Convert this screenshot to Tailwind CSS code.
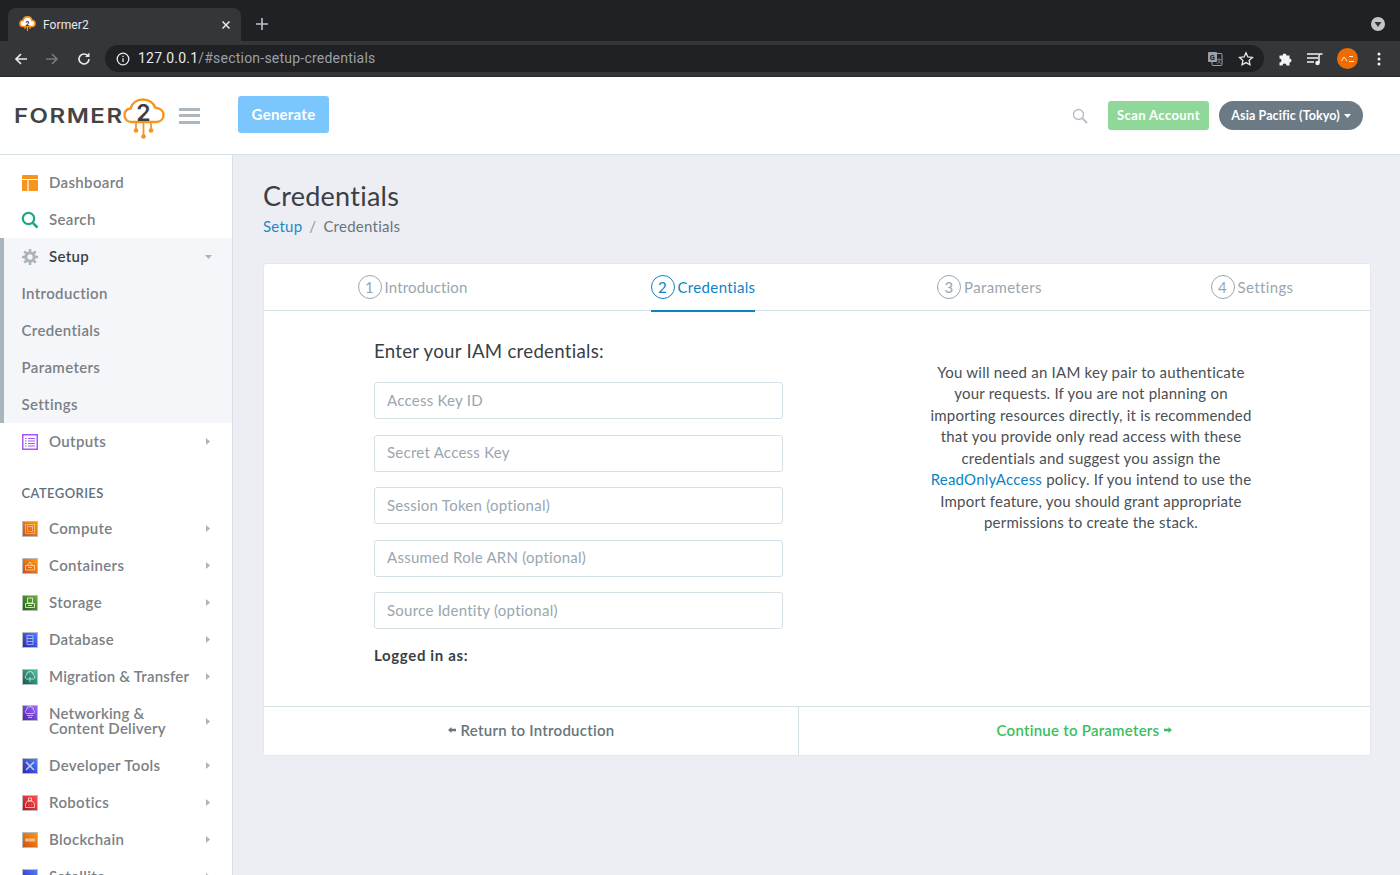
<!DOCTYPE html>
<html lang="en">
<head>
<meta charset="utf-8">
<title>Former2</title>
<script src="https://cdn.jsdelivr.net/npm/@tailwindcss/browser@4"></script>
</head>
<body class="w-[1400px] h-[875px] overflow-hidden bg-[#eceef3] [font-family:Lato,sans-serif] text-[15px] tracking-[0.25px]">
<div class="flex flex-col h-[875px] overflow-hidden">

<!-- Browser chrome -->
<div class="h-[41px] bg-[#202124] flex items-end pl-2 [font-family:Roboto,sans-serif] tracking-normal shrink-0">
  <div class="w-[233px] h-[33px] bg-[#35363a] rounded-t-lg flex items-center pl-[11px] pr-[10px] text-[12px] tracking-[0.1px] text-[#e8eaed]">
    <svg width="17" height="17" viewBox="0 0 17 17" class="shrink-0"><path d="M4 10.500a3 3 0 0 1 0-6 4.600 4.600 0 0 1 9 0 3 3 0 0 1 0 6z" fill="#fff" stroke="#f7941e" stroke-width="1.600"/><text x="8.500" y="10" font-size="7" font-weight="700" text-anchor="middle" fill="#333">2</text><path d="M6 11v2M8.500 11v4M11 11v2" stroke="#f7941e" stroke-width="1.200"/></svg>
    <span class="ml-[7px] flex-1">Former2</span>
    <svg width="10" height="10" viewBox="0 0 10 10"><path d="M1.500 1.500l7 7M8.500 1.500l-7 7" stroke="#e8eaed" stroke-width="1.500"/></svg>
  </div>
  <svg width="12" height="12" viewBox="0 0 12 12" class="ml-[15px] mb-[11px]"><path d="M6 0v12M0 6h12" stroke="#bdc1c6" stroke-width="1.600"/></svg>
  <div class="flex-1"></div>
  <svg width="14" height="14" viewBox="0 0 14 14" class="mr-[15px] mb-[10px]"><circle cx="7" cy="7" r="7" fill="#c4c7c9"/><path d="M3.500 5h7L7 10z" fill="#35363a"/></svg>
</div>
<div class="h-[36px] bg-[#35363a] border-b border-[#2a2b2e] flex items-center [font-family:Roboto,sans-serif] tracking-normal shrink-0">
  <svg width="16" height="16" viewBox="0 0 16 16" class="ml-[13px]"><path d="M14 8H3M8 3L3 8l5 5" fill="none" stroke="#e8eaed" stroke-width="1.700"/></svg>
  <svg width="16" height="16" viewBox="0 0 16 16" class="ml-[15px]"><path d="M2 8h11M8 3l5 5-5 5" fill="none" stroke="#76787c" stroke-width="1.700"/></svg>
  <svg width="16" height="16" viewBox="0 0 16 16" class="ml-[16px]"><path d="M13 8a5 5 0 1 1-1.500-3.600" fill="none" stroke="#e8eaed" stroke-width="1.600"/><path d="M13.500 1.500v4.500H9z" fill="#e8eaed"/></svg>
  <div class="ml-[13px] w-[1159px] h-[27px] rounded-full bg-[#202124] flex items-center pl-[11px] pr-[10px] text-[14px] tracking-[0.22px]">
    <svg width="14" height="14" viewBox="0 0 14 14" class="shrink-0"><circle cx="7" cy="7" r="5.800" fill="none" stroke="#e8eaed" stroke-width="1.300"/><path d="M7 6.200v3.800M7 3.800v1.300" stroke="#e8eaed" stroke-width="1.300"/></svg>
    <span class="ml-2 text-[#e8eaed]">127.0.0.1</span><span class="text-[#9aa0a6] flex-1">/#section-setup-credentials</span>
    <svg width="16" height="16" viewBox="0 0 16 16" class="mr-[15px]"><rect x="5" y="2.500" width="10" height="12" rx="1" fill="none" stroke="#9aa0a6"/><rect x="1" y="1" width="9" height="10" rx="1" fill="#9aa0a6"/><text x="5.500" y="9" font-size="7.500" font-weight="700" text-anchor="middle" fill="#202124">G</text><text x="12" y="12" font-size="6" text-anchor="middle" fill="#9aa0a6">文</text></svg>
    <svg width="16" height="16" viewBox="0 0 16 16"><path d="M8 1.800l1.900 4.100 4.500.5-3.300 3 .9 4.400L8 11.600l-4 2.200.9-4.400-3.300-3 4.500-.5z" fill="none" stroke="#e8eaed" stroke-width="1.300"/></svg>
  </div>
  <svg width="16" height="16" viewBox="0 0 16 16" class="ml-[13px]"><path d="M2 5h3a2 2 0 1 1 4 0h3v3a2 2 0 1 1 0 4v3H9a2 2 0 1 0-4 0H2v-3a2 2 0 1 0 0-4z" fill="#f1f3f4" transform="translate(0.500 -0.500)"/></svg>
  <svg width="16" height="14" viewBox="0 0 16 14" class="ml-[14px]"><path d="M0 2h11M0 6h11M0 10h7" stroke="#f1f3f4" stroke-width="1.500"/><path d="M12 11V2h3.500" fill="none" stroke="#f1f3f4" stroke-width="1.500"/><circle cx="10.500" cy="11" r="2.200" fill="#f1f3f4"/></svg>
  <div class="ml-[14px] w-[21px] h-[21px] rounded-full bg-[#ef6c00] flex items-center justify-center"><svg width="14" height="8" viewBox="0 0 14 8"><path d="M0.500 6L3 2l3 4M8 1.500h4M8 6.500h5" fill="none" stroke="#fff" stroke-width="0.900"/></svg></div>
  <svg width="4" height="14" viewBox="0 0 4 14" class="ml-[19px]"><circle cx="2" cy="2" r="1.500" fill="#f1f3f4"/><circle cx="2" cy="7" r="1.500" fill="#f1f3f4"/><circle cx="2" cy="12" r="1.500" fill="#f1f3f4"/></svg>
</div>

<!-- App header -->
<header class="h-[78px] bg-white border-b border-[#d5dfe6] flex items-center shrink-0">
  <div class="ml-[14px] w-[150px] flex items-center">
    <div class="w-[109px] shrink-0 mt-[3px]"><span class="inline-block origin-left scale-x-[1.2] [font-family:Inter,sans-serif] text-[20px] font-semibold leading-none text-[#444] tracking-[1.250px]">FORMER</span></div>
    <svg width="42" height="42" viewBox="0 0 42 42" class="shrink-0 mt-[7px]"><path d="M8 24C3.500 24 1.500 20 1.500 17C1.500 13.500 4 11 7.500 10.500C9 5 14 1.500 20 1.500C26 1.500 30.500 5 32 9.500C37 10 40.500 13 40.500 17C40.500 21 37.500 24 33 24Z" fill="#fff" stroke="#f7941e" stroke-width="2.400"/><text x="20.500" y="23" font-size="23" font-weight="600" text-anchor="middle" fill="#3f3f3f" font-family="Inter">2</text><path d="M13 24v8M28 24v8M20.500 24v14" stroke="#f7941e" stroke-width="1.800"/><circle cx="13" cy="32.500" r="2.300" fill="#f7941e"/><circle cx="28" cy="32.500" r="2.300" fill="#f7941e"/><circle cx="20.500" cy="38.500" r="2.300" fill="#f7941e"/></svg>
  </div>
  <div class="ml-[15px] w-[21px] flex flex-col gap-[3.500px]">
    <div class="h-[3px] bg-[#adb6bd]"></div><div class="h-[3px] bg-[#adb6bd]"></div><div class="h-[3px] bg-[#adb6bd]"></div>
  </div>
  <button class="ml-[38px] mb-[2px] w-[91px] h-[37px] rounded-[3px] bg-[#7cc6fe] text-white font-bold text-[15px]">Generate</button>
  <div class="flex-1"></div>
  <svg width="16" height="16" viewBox="0 0 16 16" class="mr-[20px]"><circle cx="6.500" cy="6.500" r="5" fill="none" stroke="#b4bcc3" stroke-width="1.300"/><path d="M10.200 10.200L15 15" stroke="#b4bcc3" stroke-width="1.800"/></svg>
  <button class="w-[101px] h-[29px] rounded-[3px] bg-[#90d89a] text-white font-bold text-[13px] tracking-[0.4px]">Scan Account</button>
  <button class="ml-[10px] mr-[37px] w-[144px] h-[29px] pt-[1px] rounded-full bg-[#6c7a86] text-white font-bold text-[12.500px] tracking-[0.1px] flex items-center justify-center gap-1">Asia Pacific (Tokyo)<svg width="7" height="4" viewBox="0 0 7 4"><path d="M0 0h7L3.500 4z" fill="#fff"/></svg></button>
</header>

<div class="flex flex-1 min-h-0">
  <!-- Sidebar -->
  <nav class="w-[233px] shrink-0 bg-white border-r border-[#d5dfe6] pt-[9px] overflow-hidden text-[#7b8085] font-semibold tracking-[0.35px]">
    <div class="h-[37px] flex items-center pl-[22px]"><svg width="16" height="16" viewBox="0 0 16 16" class="shrink-0"><rect width="16" height="16" rx="1" fill="#f7941e"/><path d="M0 4.500h16M6 4.500V16" stroke="#fff" stroke-width="1.200"/></svg><span class="ml-[11px]">Dashboard</span></div>
    <div class="h-[37px] flex items-center pl-[21px]"><svg width="18" height="18" viewBox="0 0 18 18" class="shrink-0"><circle cx="7.500" cy="7.500" r="5.700" fill="none" stroke="#1aa88a" stroke-width="2.200"/><path d="M11.800 11.800L16.500 16.500" stroke="#1aa88a" stroke-width="2.600"/></svg><span class="ml-[10px]">Search</span></div>

    <div class="bg-[#f4f6f9] border-l-4 border-[#a9b4bc]">
      <div class="h-[37px] flex items-center pl-[18px] pr-[20px]"><svg width="16" height="16" viewBox="0 0 16 16" class="shrink-0"><circle cx="8" cy="8" r="4.200" fill="none" stroke="#a9b4bc" stroke-width="3"/><path d="M8 0v3M8 13v3M0 8h3M13 8h3M2.300 2.300l2.100 2.100M11.600 11.600l2.100 2.100M2.300 13.700l2.100-2.100M11.600 4.400l2.100-2.100" stroke="#a9b4bc" stroke-width="2.600"/></svg><span class="ml-[11px] flex-1 text-[#3a3f44]">Setup</span><svg width="7" height="4" viewBox="0 0 7 4"><path d="M0 0h7L3.500 4z" fill="#a9b4bc"/></svg></div>
      <div class="h-[37px] flex items-center pl-[17.500px]">Introduction</div>
      <div class="h-[37px] flex items-center pl-[17.500px]">Credentials</div>
      <div class="h-[37px] flex items-center pl-[17.500px]">Parameters</div>
      <div class="h-[37px] flex items-center pl-[17.500px]">Settings</div>
    </div>

    <div class="h-[37px] flex items-center pl-[22px] pr-[22px]"><svg width="16" height="16" viewBox="0 0 16 16" class="shrink-0"><rect x="0.750" y="0.750" width="14.500" height="14.500" fill="none" stroke="#a855f7" stroke-width="1.500"/><path d="M3 4.500h1.500M6 4.500h7M3 7h1.500M6 7h7M3 9.500h1.500M6 9.500h7M3 12h1.500M6 12h7" stroke="#a855f7" stroke-width="1.100"/></svg><span class="ml-[11px] flex-1">Outputs</span><svg width="4" height="7" viewBox="0 0 4 7"><path d="M0 0l4 3.500L0 7z" fill="#a9b4bc"/></svg></div>

    <div class="mt-[17px] h-[33px] pl-[21.500px] flex items-center text-[13px] tracking-[0.4px] text-[#5f6f7d]">CATEGORIES</div>

    <div class="h-[37px] flex items-center pl-[22px] pr-[22px]"><svg width="16" height="16" viewBox="0 0 14 14" class="shrink-0 border border-[#b8bcc0] bg-linear-to-tr from-[#c8511b] to-[#f90]"><rect x="2.500" y="2.500" width="9" height="9" fill="none" stroke="#fff" stroke-opacity=".4"/><rect x="4.500" y="4.500" width="5" height="5" fill="none" stroke="#fff" stroke-opacity=".4"/></svg><span class="ml-[11px] flex-1">Compute</span><svg width="4" height="7" viewBox="0 0 4 7"><path d="M0 0l4 3.500L0 7z" fill="#a9b4bc"/></svg></div>
    <div class="h-[37px] flex items-center pl-[22px] pr-[22px]"><svg width="16" height="16" viewBox="0 0 14 14" class="shrink-0 border border-[#b8bcc0] bg-linear-to-tr from-[#c8511b] to-[#f90]"><path d="M2.500 6.500h9v4.500h-9zM4.500 6.500L7 3l2.500 3.500M5 8.500h4" fill="none" stroke="#fff" stroke-opacity=".6"/></svg><span class="ml-[11px] flex-1">Containers</span><svg width="4" height="7" viewBox="0 0 4 7"><path d="M0 0l4 3.500L0 7z" fill="#a9b4bc"/></svg></div>
    <div class="h-[37px] flex items-center pl-[22px] pr-[22px]"><svg width="16" height="16" viewBox="0 0 14 14" class="shrink-0 border border-[#b8bcc0] bg-linear-to-tr from-[#1b660f] to-[#6cae3e]"><path d="M4.500 2h5v5h-5zM2.500 7.500h9v4h-9zM5 9.500h4" fill="none" stroke="#fff" stroke-opacity=".75"/></svg><span class="ml-[11px] flex-1">Storage</span><svg width="4" height="7" viewBox="0 0 4 7"><path d="M0 0l4 3.500L0 7z" fill="#a9b4bc"/></svg></div>
    <div class="h-[37px] flex items-center pl-[22px] pr-[22px]"><svg width="16" height="16" viewBox="0 0 14 14" class="shrink-0 border border-[#b8bcc0] bg-linear-to-tr from-[#2e27ad] to-[#527fff]"><path d="M4 2.500h6v9H4zM4 5.500h6M4 8.500h6" fill="none" stroke="#fff" stroke-opacity=".5"/></svg><span class="ml-[11px] flex-1">Database</span><svg width="4" height="7" viewBox="0 0 4 7"><path d="M0 0l4 3.500L0 7z" fill="#a9b4bc"/></svg></div>
    <div class="h-[37px] flex items-center pl-[22px] pr-[22px]"><svg width="16" height="16" viewBox="0 0 14 14" class="shrink-0 border border-[#b8bcc0] bg-linear-to-tr from-[#055f4e] to-[#56c0a7]"><path d="M3.500 9a2.200 2.200 0 0 1 0-4 3.500 3.500 0 0 1 7 0 2.200 2.200 0 0 1 0 4zM7 7v5" fill="none" stroke="#fff" stroke-opacity=".65"/></svg><span class="ml-[11px] flex-1 tracking-[0.2px]">Migration &amp; Transfer</span><svg width="4" height="7" viewBox="0 0 4 7"><path d="M0 0l4 3.500L0 7z" fill="#a9b4bc"/></svg></div>
    <div class="h-[52px] flex items-center pl-[22px] pr-[22px]"><svg width="16" height="16" viewBox="0 0 14 14" class="shrink-0 self-start mt-[10px] border border-[#b8bcc0] bg-linear-to-tr from-[#4d27a8] to-[#a166ff]"><path d="M3.500 7.500a2 2 0 0 1 0-3.500 3.500 3.500 0 0 1 7 0 2 2 0 0 1 0 3.500zM4 9.500h6M5 11.500h4" fill="none" stroke="#fff" stroke-opacity=".6"/></svg><span class="ml-[11px] flex-1 leading-[15px] tracking-[0.22px]">Networking &amp;<br>Content Delivery</span><svg width="4" height="7" viewBox="0 0 4 7"><path d="M0 0l4 3.500L0 7z" fill="#a9b4bc"/></svg></div>
    <div class="h-[37px] flex items-center pl-[22px] pr-[22px]"><svg width="16" height="16" viewBox="0 0 14 14" class="shrink-0 border border-[#b8bcc0] bg-linear-to-tr from-[#2e27ad] to-[#527fff]"><path d="M3 3l8 8M11 3l-8 8" fill="none" stroke="#fff" stroke-opacity=".7" stroke-width="1.500"/></svg><span class="ml-[11px] flex-1">Developer Tools</span><svg width="4" height="7" viewBox="0 0 4 7"><path d="M0 0l4 3.500L0 7z" fill="#a9b4bc"/></svg></div>
    <div class="h-[37px] flex items-center pl-[22px] pr-[22px]"><svg width="16" height="16" viewBox="0 0 14 14" class="shrink-0 border border-[#b8bcc0] bg-linear-to-tr from-[#bd0816] to-[#ff5252]"><path d="M5.500 2h3v3h-3zM4.500 5h5l2 3v3.500h-9V8zM5 9h.5M8.500 9H9" fill="none" stroke="#fff" stroke-opacity=".65"/></svg><span class="ml-[11px] flex-1">Robotics</span><svg width="4" height="7" viewBox="0 0 4 7"><path d="M0 0l4 3.500L0 7z" fill="#a9b4bc"/></svg></div>
    <div class="h-[37px] flex items-center pl-[22px] pr-[22px]"><svg width="16" height="16" viewBox="0 0 14 14" class="shrink-0 border border-[#b8bcc0] bg-linear-to-tr from-[#c8511b] to-[#f90]"><path d="M2 5.500h10v3H2z" fill="#fff" fill-opacity=".5"/></svg><span class="ml-[11px] flex-1">Blockchain</span><svg width="4" height="7" viewBox="0 0 4 7"><path d="M0 0l4 3.500L0 7z" fill="#a9b4bc"/></svg></div>
    <div class="h-[37px] flex items-center pl-[22px] pr-[22px]"><svg width="16" height="16" viewBox="0 0 14 14" class="shrink-0 border border-[#b8bcc0] bg-linear-to-tr from-[#2e27ad] to-[#527fff]"></svg><span class="ml-[11px] flex-1">Satellite</span><svg width="4" height="7" viewBox="0 0 4 7"><path d="M0 0l4 3.500L0 7z" fill="#a9b4bc"/></svg></div>
  </nav>

  <!-- Main -->
  <main class="flex-1 pl-[30px] pr-[29px] min-w-0">
    <h1 class="mt-[24px] text-[27px] leading-[34px] text-[#3a3f44]">Credentials</h1>
    <div class="mt-[1px] h-[24px] flex items-center text-[#67757c]"><span class="text-[#1e88c7]">Setup</span><span class="mx-[7px] text-[#8a98a3]">/</span><span>Credentials</span></div>

    <section class="mt-[25px] w-[1108px] h-[493px] bg-white border border-[#e3e8ee] rounded-[3px] flex flex-col">
      <div class="h-[47px] grid grid-cols-[297px_284px_289px_1fr] border-b border-[#d5dfe6] text-[#9aa6af] tracking-[0.35px]">
        <div class="flex items-center justify-center pb-[2px] tracking-[0.15px]"><span class="w-[24px] h-[24px] rounded-full border border-[#9aa6af] flex items-center justify-center mr-[3px]">1</span>Introduction</div>
        <div class="flex items-center justify-center"><div class="h-[48px] self-start flex items-center border-b-2 border-[#0a84c6] text-[#0a84c6]"><span class="w-[24px] h-[24px] rounded-full border border-[#0a84c6] flex items-center justify-center mr-[3px]">2</span>Credentials</div></div>
        <div class="flex items-center justify-center pb-[2px]"><span class="w-[24px] h-[24px] rounded-full border border-[#9aa6af] flex items-center justify-center mr-[3px]">3</span>Parameters</div>
        <div class="flex items-center justify-center pb-[2px]"><span class="w-[24px] h-[24px] rounded-full border border-[#9aa6af] flex items-center justify-center mr-[3px]">4</span>Settings</div>
      </div>

      <div class="flex-1 flex min-h-0">
        <div class="ml-[110px] w-[409px] pt-[27px]">
          <h2 class="text-[18.700px] leading-[26px] text-[#3a3f44]">Enter your IAM credentials:</h2>
          <div class="mt-[18px] flex flex-col gap-[15.500px]">
            <input placeholder="Access Key ID" class="h-[37px] w-full px-3 pb-[2px] border border-[#d5dfe6] rounded-[3px] placeholder:text-[#9aa6af] bg-white outline-none">
            <input placeholder="Secret Access Key" class="h-[37px] w-full px-3 pb-[2px] border border-[#d5dfe6] rounded-[3px] placeholder:text-[#9aa6af] bg-white outline-none">
            <input placeholder="Session Token (optional)" class="h-[37px] w-full px-3 pb-[2px] border border-[#d5dfe6] rounded-[3px] placeholder:text-[#9aa6af] bg-white outline-none">
            <input placeholder="Assumed Role ARN (optional)" class="h-[37px] w-full px-3 pb-[2px] border border-[#d5dfe6] rounded-[3px] placeholder:text-[#9aa6af] bg-white outline-none">
            <input placeholder="Source Identity (optional)" class="h-[37px] w-full px-3 pb-[2px] border border-[#d5dfe6] rounded-[3px] placeholder:text-[#9aa6af] bg-white outline-none">
          </div>
          <p class="mt-[15px] font-bold text-[#3a3f44] leading-[22px] tracking-[0.65px]">Logged in as:</p>
        </div>
        <div class="ml-[136px] w-[344px] pt-[51px]">
          <p class="text-center leading-[21.430px] text-[#4a4f54] tracking-[0.22px]">You will need an IAM key pair to authenticate<br>your requests. If you are not planning on<br>importing resources directly, it is recommended<br>that you provide only read access with these<br>credentials and suggest you assign the<br><span class="text-[#0a84c6]">ReadOnlyAccess</span> policy. If you intend to use the<br>Import feature, you should grant appropriate<br>permissions to create the stack.</p>
        </div>
      </div>

      <div class="h-[49px] grid grid-cols-[535px_1fr] border-t border-[#d5dfe6] font-semibold">
        <div class="flex items-center justify-center pb-[2px] text-[#67757c] border-r border-[#d5dfe6]"><svg width="8" height="6" viewBox="0 0 8 6" class="mr-[5px]"><path d="M0 3l3.500-3v1.800H8v2.400H3.500V6z" fill="#67757c"/></svg>Return to Introduction</div>
        <div class="flex items-center justify-center pb-[2px] text-[#39c05a]">Continue to Parameters<svg width="8" height="6" viewBox="0 0 8 6" class="ml-[5px]"><path d="M8 3L4.500 0v1.800H0v2.400h4.500V6z" fill="#39c05a"/></svg></div>
      </div>
    </section>
  </main>
</div>
</div>
</body>
</html>
